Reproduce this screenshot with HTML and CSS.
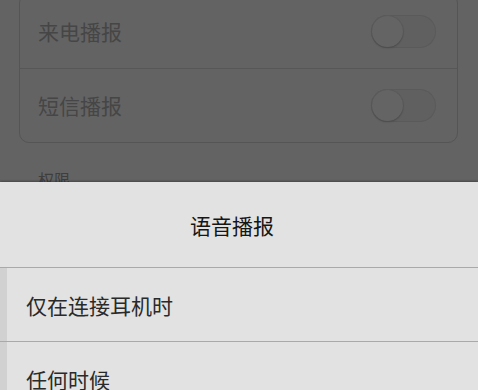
FILE: index.html
```html
<!DOCTYPE html>
<html lang="zh">
<head>
<meta charset="utf-8">
<link rel="stylesheet" href="styles.css">
</head>
<body>
<div class="screen">
  <div class="card">
    <div class="row">
      <span class="label">来电播报</span>
      <span class="toggle"><span class="knob"></span></span>
    </div>
    <div class="row">
      <span class="label">短信播报</span>
      <span class="toggle"><span class="knob"></span></span>
    </div>
  </div>
  <div class="section">权限</div>

  <div class="sheet">
    <div class="title">语音播报</div>
    <div class="list">
      <div class="item">仅在连接耳机时</div>
      <div class="item">任何时候</div>
    </div>
  </div>
</div>
</body>
</html>
```

FILE: styles.css
```css
html, body {
  margin: 0;
  padding: 0;
}
body {
  width: 478px;
  height: 390px;
  overflow: hidden;
  background: #636363;
  font-family: "Noto Sans CJK SC", "Noto Sans", sans-serif;
}
.screen {
  position: relative;
  width: 478px;
  height: 390px;
  overflow: hidden;
  padding: 0 20px 0 19px;
  box-sizing: border-box;
}
.card {
  margin-top: -7px;
  border: 1px solid #555555;
  border-radius: 10px;
  background: #636363;
}
.row {
  display: flex;
  align-items: center;
  justify-content: space-between;
  height: 74px;
  padding: 0 21px 0 18px;
}
.row + .row {
  border-top: 1px solid #575757;
  height: 73px;
}
.label {
  font-size: 21px;
  color: #464646;
  line-height: 1;
}
.toggle {
  position: relative;
  width: 65px;
  height: 33px;
  border-radius: 17px;
  background: #606060;
  box-shadow: inset 0 0 0 1px #5a5a5a;
}
.knob {
  position: absolute;
  left: 1px;
  top: 1px;
  width: 31px;
  height: 31px;
  border-radius: 50%;
  background: #646464;
  box-shadow: 0 1px 2px rgba(0,0,0,0.2), 0 0 0 1px #5c5c5c;
}
.section {
  margin-top: 24px;
  padding-left: 19px;
  font-size: 16px;
  color: #3e3e3e;
  line-height: 24px;
}
.sheet {
  position: absolute;
  left: 0;
  right: 0;
  top: 182px;
  bottom: 0;
  background: #e2e2e2;
  box-shadow: 0 -1px 2px rgba(0,0,0,0.3);
}
.title {
  height: 85px;
  display: flex;
  align-items: center;
  justify-content: center;
  padding-right: 14px;
  font-size: 21px;
  color: #161616;
  border-bottom: 1px solid #a9a9a9;
}
.item {
  height: 73px;
  display: flex;
  align-items: center;
  padding-left: 26px;
  font-size: 21px;
  color: #2a2a2a;
  border-bottom: 1px solid #a9a9a9;
  background: linear-gradient(to right, #d1d1d1 0, #d1d1d1 7px, transparent 7px);
}
```
